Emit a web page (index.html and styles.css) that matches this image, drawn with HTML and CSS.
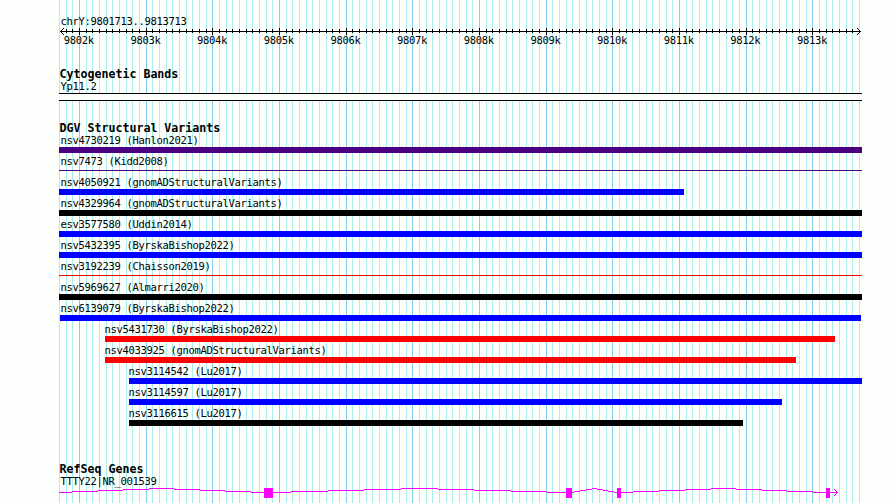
FILE: index.html
```
<!DOCTYPE html>
<html lang="en">
<head>
<meta charset="utf-8">
<title>chrY:9801713..9813713</title>
<link rel="stylesheet" href="styles.css">
</head>
<body>
<main class="browser">
  <header class="ruler">
    <div class="label">chrY:9801713..9813713</div>
    <svg class="axis" width="803" height="9" viewBox="0 0 803 9" shape-rendering="crispEdges">
      <defs>
        <pattern id="minor" width="20" height="9" patternUnits="userSpaceOnUse">
          <path d="M0 2h1v4h-1zM7 2h1v4h-1zM13 2h1v4h-1z"/>
        </pattern>
        <pattern id="major" width="200" height="9" patternUnits="userSpaceOnUse">
          <path d="M20 1h1v7h-1zM87 1h1v7h-1zM153 1h1v7h-1z"/>
        </pattern>
      </defs>
      <rect x="5" width="794" height="9" fill="url(#minor)"/>
      <rect width="803" height="9" fill="url(#major)"/>
      <path d="M1 4h801v1h-801zM2 3h1v3h-1zM3 2h1v1h-1zM3 6h1v1h-1zM4 1h1v1h-1zM4 7h1v1h-1zM800 3h1v3h-1zM799 2h1v1h-1zM799 6h1v1h-1zM798 1h1v1h-1zM798 7h1v1h-1z"/>
    </svg>
    <div class="ticks label">
      <span>9802k</span><span>9803k</span><span>9804k</span><span>9805k</span><span>9806k</span><span>9807k</span><span>9808k</span><span>9809k</span><span>9810k</span><span>9811k</span><span>9812k</span><span>9813k</span>
    </div>
  </header>

  <section class="track bands">
    <h2>Cytogenetic Bands</h2>
    <div class="label">Yp11.2</div>
    <div class="band"></div>
  </section>

  <section class="track variants">
    <h2>DGV Structural Variants</h2>
    <div class="row"><div class="label">nsv4730219 (Hanlon2021)</div><div class="bar indigo"></div></div>
    <div class="row"><div class="label">nsv7473 (Kidd2008)</div><div class="bar thin indigo"></div></div>
    <div class="row"><div class="label">nsv4050921 (gnomADStructuralVariants)</div><div class="bar blue" style="width:625px"></div></div>
    <div class="row"><div class="label">nsv4329964 (gnomADStructuralVariants)</div><div class="bar black"></div></div>
    <div class="row"><div class="label">esv3577580 (Uddin2014)</div><div class="bar blue"></div></div>
    <div class="row"><div class="label">nsv5432395 (ByrskaBishop2022)</div><div class="bar blue"></div></div>
    <div class="row"><div class="label">nsv3192239 (Chaisson2019)</div><div class="bar thin red"></div></div>
    <div class="row"><div class="label">nsv5969627 (Almarri2020)</div><div class="bar black"></div></div>
    <div class="row"><div class="label">nsv6139079 (ByrskaBishop2022)</div><div class="bar blue inset"></div></div>
    <div class="row from-46"><div class="label">nsv5431730 (ByrskaBishop2022)</div><div class="bar red" style="width:730px"></div></div>
    <div class="row from-46"><div class="label">nsv4033925 (gnomADStructuralVariants)</div><div class="bar red" style="width:691px"></div></div>
    <div class="row from-70"><div class="label">nsv3114542 (Lu2017)</div><div class="bar blue"></div></div>
    <div class="row from-70"><div class="label">nsv3114597 (Lu2017)</div><div class="bar blue" style="width:653px"></div></div>
    <div class="row from-70"><div class="label">nsv3116615 (Lu2017)</div><div class="bar black" style="width:614px"></div></div>
  </section>

  <section class="track genes">
    <h2>RefSeq Genes</h2>
    <div class="label">TTTY22|NR_001539</div>
    <svg class="gene" width="803" height="12" viewBox="59 487 803 12" shape-rendering="crispEdges">
      <g fill="none" stroke="#ff00ff">
        <path d="M59 492.5H72M72 491.5H98M98 490.5H123M123 489.5H149M149 488.5H174M174 489.5H200M200 490.5H225M225 491.5H251M251 492.5H264"/>
        <path d="M273 492.5H291M291 491.5H328M328 490.5H364M364 489.5H401M401 488.5H438M438 489.5H474M474 490.5H511M511 491.5H547M547 492.5H566"/>
        <path d="M572 492.5H574M574 491.5H580M580 490.5H586M586 489.5H592M592 488.5H597M597 489.5H603M603 490.5H608M608 491.5H614M614 492.5H617"/>
        <path d="M621 492.5H633M633 491.5H659M659 490.5H685M685 489.5H711M711 488.5H736M736 489.5H762M762 490.5H787M787 491.5H813M813 492.5H826M830 492.5H838"/>
        <path d="M834 489.5h1M835 490.5h1M836 491.5h1M836 493.5h1M835 494.5h1M834 495.5h1"/>
      </g>
      <path fill="#ff00ff" d="M264 488h9v10h-9zM566 488h6v10h-6zM617 488h4v10h-4zM826 488h4v10h-4z"/>
    </svg>
  </section>
</main>
</body>
</html>
```
FILE: styles.css
```
* { box-sizing: border-box; }

body {
  margin: 0;
  background: #fdfffc;
  color: #000;
  overflow: hidden;
}

.browser {
  width: 803px;
  height: 503px;
  margin-left: 59px;
  padding-top: 15px;
  font-family: "DejaVu Sans Mono", monospace;
  background-image:
    linear-gradient(90deg, transparent 20px, #87ceeb 20px, #87ceeb 21px, transparent 21px, transparent 87px, #87ceeb 87px, #87ceeb 88px, transparent 88px, transparent 153px, #87ceeb 153px, #87ceeb 154px, transparent 154px),
    linear-gradient(90deg, #afeeee 1px, transparent 1px, transparent 7px, #afeeee 7px, #afeeee 8px, transparent 8px, transparent 13px, #afeeee 13px, #afeeee 14px, transparent 14px);
  background-size: 200px 100%, 20px 100%;
}

.label {
  height: 12px;
  padding-left: 1.4px;
  font-size: 10.5px;
  line-height: 12px;
  letter-spacing: -0.32px;
  white-space: pre;
}

h2 {
  margin: 0;
  padding-left: 0.4px;
  height: 12px;
  font-size: 11.63px;
  font-weight: 700;
  line-height: 12px;
  white-space: pre;
}

.axis, .gene { display: block; }

.ticks {
  display: flex;
  width: 800px;
  margin: -2px 0 0 4.8px;
  padding: 0;
}

.ticks span { flex: 0 0 66.6667px; }

.bands { margin-top: 22px; }

.band {
  height: 8px;
  margin-top: 1px;
  border-top: 1px solid #000;
  border-bottom: 1px solid #000;
  background: #fdfffc;
}

.variants { margin-top: 21px; }

.row {
  display: flex;
  flex-direction: column;
  height: 21px;
}

.from-46 { margin-left: 46px; }
.from-70 { margin-left: 70px; }
.from-46 .label, .from-70 .label { padding-left: 0; margin-left: -0.5px; }

.bar { height: 6px; margin-top: 1px; }
.bar.thin { height: 1px; margin-top: 3px; }
.bar.inset { margin-left: 1px; margin-right: 1px; }

.indigo { background: #4b0082; }
.blue { background: #0000ff; }
.black { background: #000; }
.red { background: #ff0000; }

.genes { margin-top: 35px; }
```
